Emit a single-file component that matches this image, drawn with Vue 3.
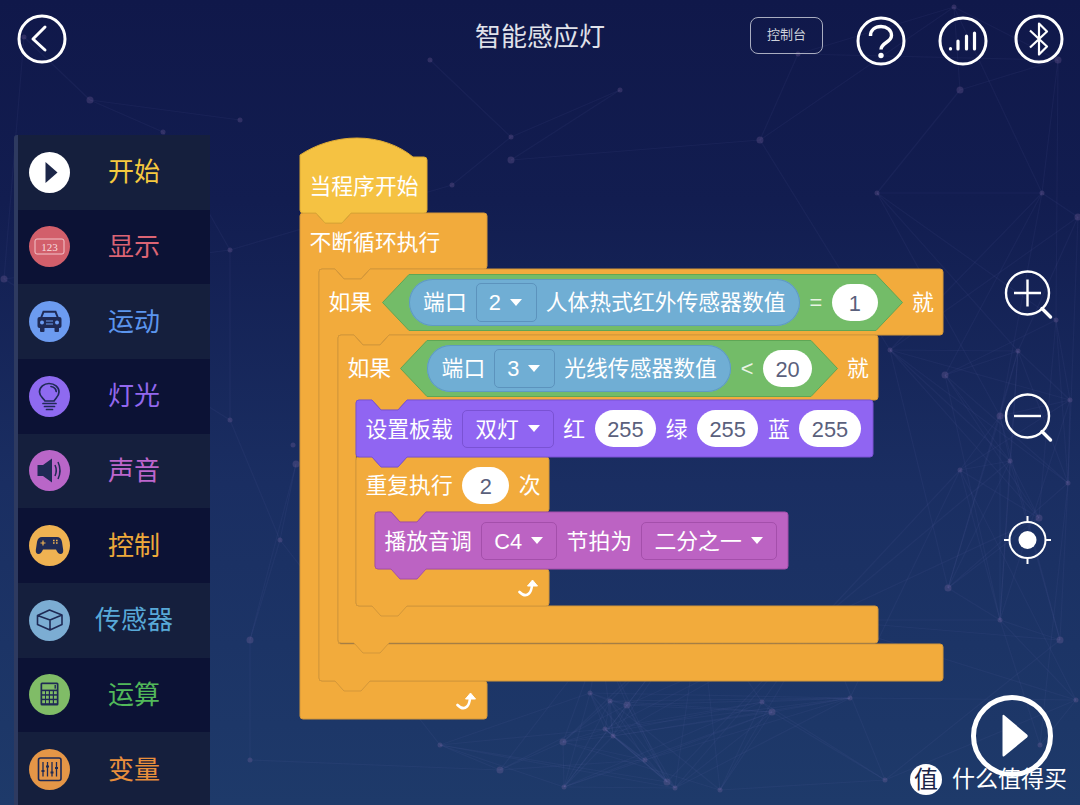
<script setup>
// notch sizes shared by every block
const R = 3
const notchLeft = 16

function notch(x, y) {
  return `L${x + notchLeft} ${y} l9 10 h17 l9 -10 `
}
function tab(x, y) {
  return `L${x + notchLeft + 35} ${y} l-9 10 h-17 l-9 -10 `
}

function stackBlock(x, y, w, h, hasTab = true) {
  return `M${x} ${y + R} Q${x} ${y} ${x + R} ${y} ` + notch(x, y) +
    `L${x + w - R} ${y} Q${x + w} ${y} ${x + w} ${y + R} L${x + w} ${y + h - R} Q${x + w} ${y + h} ${x + w - R} ${y + h} ` +
    (hasTab ? tab(x, y + h) : '') +
    `L${x + R} ${y + h} Q${x} ${y + h} ${x} ${y + h - R} Z`
}

function cBlock(x, y, w, head, arm, innerEnd, tw, end, hasTab = true) {
  const yh = y + head
  const ax = x + arm
  return `M${x} ${y + R} Q${x} ${y} ${x + R} ${y} ` + notch(x, y) +
    `L${x + w - R} ${y} Q${x + w} ${y} ${x + w} ${y + R} L${x + w} ${yh - R} Q${x + w} ${yh} ${x + w - R} ${yh} ` +
    tab(ax, yh) +
    `L${ax + R} ${yh} Q${ax} ${yh} ${ax} ${yh + R} L${ax} ${innerEnd - R} Q${ax} ${innerEnd} ${ax + R} ${innerEnd} ` +
    `L${x + tw - R} ${innerEnd} Q${x + tw} ${innerEnd} ${x + tw} ${innerEnd + R} L${x + tw} ${end - R} Q${x + tw} ${end} ${x + tw - R} ${end} ` +
    (hasTab ? tab(x, end) : '') +
    `L${x + R} ${end} Q${x} ${end} ${x} ${end - R} Z`
}

const shapes = [
  { cls: 'orange', d: cBlock(300, 213, 187, 56, 19, 681, 187, 719, false) },
  { cls: 'orange', d: cBlock(319, 269, 624, 66, 19, 644, 624, 681) },
  { cls: 'orange', d: cBlock(338, 335, 540, 65, 18, 606, 540, 643) },
  { cls: 'orange', d: cBlock(356, 457, 193, 55, 19, 569, 193, 606) },
  { cls: 'magenta', d: stackBlock(375, 512, 413, 57) },
  { cls: 'purple', d: stackBlock(356, 400, 517, 57) },
  {
    cls: 'yellow',
    d: 'M300 155 C315 145 335 138 357 138 C380 138 400 146 413 157 L424 157 Q427 157 427 160 L427 210 Q427 213 424 213 ' +
      tab(300, 213) + 'L303 213 Q300 213 300 210 Z',
  },
]

function hexPath(w, h, p) {
  return `M0.5 ${h / 2} L${p} 0.5 H${w - p} L${w - 0.5} ${h / 2} L${w - p} ${h - 0.5} H${p} Z`
}

// faint network in the backdrop, points read off the reference
const dots = [
  [4, 279], [163, 132], [293, 445], [296, 464], [24, 37], [511, 137], [511, 160], [452, 185],
  [890, 350], [945, 375], [954, 7], [798, 54], [1058, 60], [1056, 320], [1018, 351], [1000, 416],
  [1010, 461], [1068, 483], [1039, 518], [877, 193], [1042, 193], [1078, 217], [590, 693], [610, 701],
  [627, 705], [605, 729], [613, 736], [563, 742], [645, 760], [564, 787], [667, 782], [675, 788],
  [762, 702], [772, 712], [850, 698], [885, 780], [948, 588], [1076, 700], [1040, 745], [250, 640],
  [230, 420], [240, 120], [760, 140], [620, 90], [430, 60], [90, 100], [960, 470], [250, 760],
  [500, 770], [440, 745], [1000, 620], [1060, 640], [600, 640], [700, 610], [820, 620], [280, 540],
  [230, 250], [960, 90], [1070, 400], [720, 790],
]
let seed = 29
function rnd() {
  seed = (seed * 16807) % 2147483647
  return seed / 2147483647
}
const links = []
dots.forEach((a, i) => {
  dots.slice(i + 1).forEach((b) => {
    const dist = Math.hypot(a[0] - b[0], a[1] - b[1])
    if (dist < 270 && rnd() > 0.45) links.push([a, b])
  })
})
</script>

<template>
  <div class="page">
    <svg class="net" width="1080" height="805">
      <line v-for="(l, i) in links" :key="i" :x1="l[0][0]" :y1="l[0][1]" :x2="l[1][0]" :y2="l[1][1]" />
      <circle v-for="(c, i) in dots" :key="'d' + i" :cx="c[0]" :cy="c[1]" :r="i % 3 === 0 ? 3.5 : 2.5" />
    </svg>

    <header class="top">
      <svg class="back" width="50" height="50" viewBox="0 0 50 50">
        <circle cx="25" cy="25" r="23" fill="none" stroke="#fff" stroke-width="3" />
        <path d="M28 13 L16 25 L28 36" fill="none" stroke="#fff" stroke-width="3" stroke-linecap="round" stroke-linejoin="round" />
      </svg>
      <h1 class="title">智能感应灯</h1>
      <div class="console">控制台</div>
      <svg class="tool" width="50" height="50" viewBox="0 0 50 50">
        <circle cx="25" cy="25" r="23" fill="none" stroke="#fff" stroke-width="3" />
        <path d="M14.5 20 C14.5 14 19 10.5 25 10.5 C31 10.5 35.5 14 35.5 19.5 C35.5 26.5 25 26.5 25 33.5" fill="none" stroke="#fff" stroke-width="3.4" />
        <circle cx="25" cy="39.5" r="2.7" fill="#fff" />
      </svg>
      <svg class="tool tool-signal" width="50" height="50" viewBox="0 0 50 50">
        <circle cx="25" cy="25" r="23" fill="none" stroke="#fff" stroke-width="3" />
        <g stroke="#fff" stroke-width="3.2" stroke-linecap="round">
          <path d="M12.5 33 V32.5" />
          <path d="M20 33 V25" />
          <path d="M28.5 33 V20" />
          <path d="M36.5 33 V17" />
        </g>
      </svg>
      <svg class="tool tool-bt" width="50" height="50" viewBox="0 0 50 50">
        <circle cx="25" cy="25" r="23" fill="none" stroke="#fff" stroke-width="3" />
        <path d="M16 16.5 L33 32.5 L25 40.5 V9.5 L33 17.5 L16 33.5" fill="none" stroke="#fff" stroke-width="2.2" stroke-linejoin="round" />
      </svg>
    </header>

    <div class="main">
      <nav class="side">
        <div class="cat c-start">
          <svg class="ico" width="41" height="41" viewBox="0 0 41 41">
            <circle cx="20.5" cy="20.5" r="20.5" fill="#fff" />
            <path d="M16.5 10 L28.5 20.5 L16.5 31 Z" fill="#1c2648" />
          </svg>
          <span>开始</span>
        </div>
        <div class="cat c-show">
          <svg class="ico" width="41" height="41" viewBox="0 0 41 41">
            <circle cx="20.5" cy="20.5" r="20.5" fill="#d25f6b" />
            <rect x="6" y="13" width="29" height="15" rx="2" fill="none" stroke="#f3c6cb" stroke-width="1" />
            <text x="20.5" y="24.5" text-anchor="middle" class="ico-num">123</text>
          </svg>
          <span>显示</span>
        </div>
        <div class="cat c-move">
          <svg class="ico" width="41" height="41" viewBox="0 0 41 41">
            <circle cx="20.5" cy="20.5" r="20.5" fill="#6c9bf0" />
            <path d="M12 17 L14.5 10.8 H26.5 L29 17" fill="none" stroke="#1f2a55" stroke-width="2" />
            <rect x="8.5" y="16" width="24" height="11" rx="2" fill="#1f2a55" />
            <rect x="11" y="26" width="4.5" height="5" rx="1" fill="#1f2a55" />
            <rect x="25.5" y="26" width="4.5" height="5" rx="1" fill="#1f2a55" />
            <circle cx="13" cy="21.5" r="2" fill="#6c9bf0" />
            <circle cx="28" cy="21.5" r="2" fill="#6c9bf0" />
            <path d="M17 20 H24 M17 23 H24" stroke="#6c9bf0" stroke-width="1.2" />
          </svg>
          <span>运动</span>
        </div>
        <div class="cat c-light">
          <svg class="ico" width="41" height="41" viewBox="0 0 41 41">
            <circle cx="20.5" cy="20.5" r="20.5" fill="#8e6af0" />
            <g fill="none" stroke="#1f2a55" stroke-width="1.7" stroke-linecap="round">
              <path d="M16 25 C14 22 10.5 20.5 10.5 16 C10.5 11 15 7.5 20 7.5 C25.5 7.5 30 11 30 16 C30 20.5 26.5 22 25 25 Z" />
              <path d="M22 10.5 C25 11 27 13 27.2 15.5" />
              <path d="M14 27.5 H27 M15.5 30.5 H25.5 M17.5 33.5 H23.5" />
            </g>
          </svg>
          <span>灯光</span>
        </div>
        <div class="cat c-sound">
          <svg class="ico" width="41" height="41" viewBox="0 0 41 41">
            <circle cx="20.5" cy="20.5" r="20.5" fill="#b966c8" />
            <path d="M8.5 15 H14 L23 8.5 V32.5 L14 26 H8.5 Z" fill="#1f2a55" />
            <path d="M26 15 Q28.5 20.5 26 26 M29 12 Q33 20.5 29 29" fill="none" stroke="#1f2a55" stroke-width="1.5" />
          </svg>
          <span>声音</span>
        </div>
        <div class="cat c-ctrl">
          <svg class="ico" width="41" height="41" viewBox="0 0 41 41">
            <circle cx="20.5" cy="20.5" r="20.5" fill="#efb252" />
            <path d="M13 12 H28 Q32 12 33 17 L34.2 25 Q34.5 29 31.5 29 Q29 29 27 24.5 H14 Q12 29 9.5 29 Q6.5 29 6.8 25 L8 17 Q9 12 13 12 Z" fill="#1f2a55" />
            <path d="M11.5 18 H16.5 M14 15.5 V20.5" stroke="#efb252" stroke-width="1.2" />
            <path d="M24 15.5 h1.6 M27 15.5 h1.6 M24 18 h1.6 M27 18 h1.6" stroke="#efb252" stroke-width="1.5" />
          </svg>
          <span>控制</span>
        </div>
        <div class="cat c-sensor">
          <svg class="ico" width="41" height="41" viewBox="0 0 41 41">
            <circle cx="20.5" cy="20.5" r="20.5" fill="#7cadd3" />
            <path d="M8.5 15.5 L20.5 10 L33 15 L21 20 Z M8.5 15.5 V24.5 L21 30 V20 M33 15 V24.5 L21 30" fill="none" stroke="#1f2a55" stroke-width="1.6" stroke-linejoin="round" />
          </svg>
          <span>传感器</span>
        </div>
        <div class="cat c-calc">
          <svg class="ico" width="41" height="41" viewBox="0 0 41 41">
            <circle cx="20.5" cy="20.5" r="20.5" fill="#80bc67" />
            <rect x="11.5" y="8.5" width="18" height="23" rx="1.5" fill="#1f2a55" />
            <rect x="13.2" y="10.2" width="14.6" height="5.4" fill="#80bc67" />
            <rect x="25.5" y="11" width="1.4" height="3.6" fill="#1f2a55" />
            <g fill="#80bc67">
              <rect x="13.2" y="17.2" width="2.8" height="3" /><rect x="17" y="17.2" width="2.8" height="3" /><rect x="21" y="17.2" width="2.8" height="3" /><rect x="25" y="17.2" width="2.8" height="3" />
              <rect x="13.2" y="21.7" width="2.8" height="3" /><rect x="17" y="21.7" width="2.8" height="3" /><rect x="21" y="21.7" width="2.8" height="3" /><rect x="25" y="21.7" width="2.8" height="3" />
              <rect x="13.2" y="26.2" width="2.8" height="3" /><rect x="17" y="26.2" width="2.8" height="3" /><rect x="21" y="26.2" width="2.8" height="3" /><rect x="25" y="26.2" width="2.8" height="3" />
            </g>
          </svg>
          <span>运算</span>
        </div>
        <div class="cat c-var">
          <svg class="ico" width="41" height="41" viewBox="0 0 41 41">
            <circle cx="20.5" cy="20.5" r="20.5" fill="#e59647" />
            <rect x="9.5" y="9" width="22.5" height="22.5" rx="2" fill="none" stroke="#1f2a55" stroke-width="1.6" />
            <g stroke="#1f2a55" stroke-width="1.3">
              <path d="M14 13 V27.5 M18.5 13 V27.5 M23 13 V27.5 M27.5 13 V27.5" />
              <path d="M12.5 22 h3 M17 17.5 h3 M21.5 23.5 h3 M26 19 h3" stroke-width="2" />
            </g>
          </svg>
          <span>变量</span>
        </div>
      </nav>

      <aside class="zoomers">
        <svg width="50" height="50" viewBox="0 0 50 50">
          <circle cx="23.5" cy="23" r="21.5" fill="none" stroke="#fff" stroke-width="2.4" />
          <path d="M38 38.5 L46.5 47" stroke="#fff" stroke-width="3.4" stroke-linecap="round" />
          <path d="M10 23 H37 M23.5 9.5 V36.5" stroke="#fff" stroke-width="2.4" />
        </svg>
        <svg width="50" height="50" viewBox="0 0 50 50">
          <circle cx="23.5" cy="23" r="21.5" fill="none" stroke="#fff" stroke-width="2.4" />
          <path d="M38 38.5 L46.5 47" stroke="#fff" stroke-width="3.4" stroke-linecap="round" />
          <path d="M10 23 H37" stroke="#fff" stroke-width="2.4" />
        </svg>
        <svg width="50" height="50" viewBox="0 0 50 50">
          <circle cx="23.5" cy="25" r="18" fill="none" stroke="#fff" stroke-width="2" />
          <circle cx="23.5" cy="25" r="9" fill="#fff" />
          <path d="M23.5 1 V7 M23.5 43 V49 M0 25 H5.5 M41.5 25 H47" stroke="#fff" stroke-width="2" />
        </svg>
      </aside>
    </div>

    <!-- blocks sit on the free canvas -->
    <svg class="shapes" width="1080" height="805">
      <path v-for="(s, i) in shapes" :key="i" :d="s.d" :class="s.cls" />
    </svg>

    <div class="row r-hat"><span>当程序开始</span></div>
    <div class="row r-forever"><span>不断循环执行</span></div>

    <div class="row r-if1">
      <span>如果</span>
      <div class="bool b1">
        <svg width="521" height="57"><path :d="hexPath(521, 57, 27)" /></svg>
        <div class="reporter">
          <span>端口</span>
          <div class="dd dd-blue">2<i class="caret"></i></div>
          <span>人体热式红外传感器数值</span>
        </div>
        <span class="op">=</span>
        <div class="pill p46">1</div>
      </div>
      <span>就</span>
    </div>

    <div class="row r-if2">
      <span>如果</span>
      <div class="bool b2">
        <svg width="438" height="57"><path :d="hexPath(438, 57, 27)" /></svg>
        <div class="reporter">
          <span>端口</span>
          <div class="dd dd-blue">3<i class="caret"></i></div>
          <span>光线传感器数值</span>
        </div>
        <span class="op">&lt;</span>
        <div class="pill p49">20</div>
      </div>
      <span>就</span>
    </div>

    <div class="row r-led">
      <span>设置板载</span>
      <div class="dd dd-purple">双灯<i class="caret"></i></div>
      <span>红</span>
      <div class="pill p61">255</div>
      <span>绿</span>
      <div class="pill p61">255</div>
      <span>蓝</span>
      <div class="pill p61">255</div>
    </div>

    <div class="row r-repeat">
      <span>重复执行</span>
      <div class="pill p47">2</div>
      <span>次</span>
    </div>

    <div class="row r-tone">
      <span>播放音调</span>
      <div class="dd dd-magenta">C4<i class="caret"></i></div>
      <span>节拍为</span>
      <div class="dd dd-magenta">二分之一<i class="caret"></i></div>
    </div>

    <svg class="loop l-inner" width="21" height="20" viewBox="0 0 21 20">
      <path d="M1.5 13 Q7 18.5 11 14.5 Q13.5 12 14 6" fill="none" stroke="#fff" stroke-width="2.6" stroke-linecap="round" />
      <path d="M9.5 7 L14.5 1 L19.5 7 Z" fill="#fff" stroke="#fff" stroke-width="1" stroke-linejoin="round" />
    </svg>
    <svg class="loop l-outer" width="21" height="20" viewBox="0 0 21 20">
      <path d="M1.5 13 Q7 18.5 11 14.5 Q13.5 12 14 6" fill="none" stroke="#fff" stroke-width="2.6" stroke-linecap="round" />
      <path d="M9.5 7 L14.5 1 L19.5 7 Z" fill="#fff" stroke="#fff" stroke-width="1" stroke-linejoin="round" />
    </svg>

    <svg class="run" width="82" height="82" viewBox="0 0 82 82">
      <circle cx="41" cy="41" r="38.5" fill="none" stroke="#fff" stroke-width="5" />
      <path d="M33 20 Q31.5 19 31.5 21 V60 Q31.5 62.5 33.5 61 L56 42.5 Q57.5 41 56 39.5 Z" fill="#fff" />
    </svg>

    <div class="mark">
      <div class="mark-logo">值</div>
      <span>什么值得买</span>
    </div>
  </div>
</template>

<style>
html, body {
  margin: 0;
  background: #10184a;
}
</style>

<style scoped>
.page {
  position: relative;
  width: 1080px;
  height: 805px;
  overflow: hidden;
  background: linear-gradient(180deg, #10184a 0%, #121d50 25%, #1a2e62 60%, #1e3a6a 100%);
  font-family: "Liberation Sans", "Noto Sans CJK SC", sans-serif;
  color: #fff;
}
.net {
  position: absolute;
  left: 0;
  top: 0;
}
.net line {
  stroke: rgba(130, 130, 205, 0.07);
  stroke-width: 1.2;
}
.net circle {
  fill: rgba(150, 115, 175, 0.24);
}

/* header */
.top {
  position: relative;
  height: 80px;
  display: flex;
  align-items: flex-start;
  padding: 14px 16px 0 17px;
  box-sizing: border-box;
}
.back {
  flex: none;
}
.title {
  position: absolute;
  left: 0;
  right: 0;
  top: 19px;
  margin: 0;
  text-align: center;
  font-size: 26px;
  line-height: 36px;
  font-weight: 400;
  color: #e0e2ea;
}
.console {
  margin: 3px 0 0 auto;
  width: 73px;
  height: 37px;
  box-sizing: border-box;
  border: 1.5px solid #a9adc0;
  border-radius: 8px;
  font-size: 13px;
  line-height: 34px;
  text-align: center;
  color: #cdd0da;
}
.tool {
  margin: 2px 0 0 33px;
  flex: none;
}
.tool-signal {
  margin-left: 32px;
}
.tool-bt {
  margin: 0 0 0 26px;
}

/* left category list */
.main {
  position: relative;
  display: flex;
  justify-content: space-between;
}
.side {
  margin: 55px 0 0 14px;
  width: 196px;
  border-left: 4px solid #2e3a60;
  border-radius: 3px 0 0 0;
  box-sizing: border-box;
}
.cat {
  height: 74.67px;
  display: flex;
  align-items: center;
  padding: 0 12px 0 11px;
  box-sizing: border-box;
  background: #151f3d;
}
.cat:nth-child(even) {
  background: #0c1235;
}
.cat span {
  flex: 1;
  text-align: center;
  font-size: 26px;
  line-height: 1;
}
.ico {
  flex: none;
}
.ico-num {
  font-family: "Liberation Serif", serif;
  font-size: 11px;
  fill: #f7dcdf;
}
.c-start { color: #f5c93f; }
.c-show { color: #dc6474; }
.c-move { color: #5b95ee; }
.c-light { color: #9368ee; }
.c-sound { color: #bd66cd; }
.c-ctrl { color: #eea93a; }
.c-sensor { color: #58a9d8; }
.c-calc { color: #52b95a; }
.c-var { color: #e98f3c; }

/* right zoom tools */
.zoomers {
  display: flex;
  flex-direction: column;
  gap: 72.5px;
  margin: 190px 26.5px 0 0;
}

/* block shapes */
.shapes {
  position: absolute;
  left: 0;
  top: 0;
}
.shapes path {
  stroke-width: 1;
}
.orange { fill: #f2ab3c; stroke: #d3973a; }
.yellow { fill: #f5c242; stroke: #dca935; }
.purple { fill: #9065f2; stroke: #7a52d4; }
.magenta { fill: #bc63c3; stroke: #a44fab; }

.row {
  position: absolute;
  display: flex;
  align-items: center;
  gap: 9.5px;
  padding-left: 9.5px;
  font-size: 21.8px;
  line-height: 1;
  white-space: nowrap;
}
.row > span,
.reporter > span,
.bool > span {
  padding-top: 2px;
}
.r-hat { left: 300px; top: 158px; height: 55px; }
.r-forever { left: 300px; top: 214px; height: 56px; }
.r-if1 { left: 319px; top: 269px; height: 66px; }
.r-if2 { left: 338px; top: 335px; height: 66px; gap: 9px; }
.r-led { left: 356px; top: 400px; height: 57px; }
.r-repeat { left: 356px; top: 457px; height: 56px; }
.r-tone { left: 375px; top: 512px; height: 57px; }

.bool {
  position: relative;
  height: 57px;
  display: flex;
  align-items: center;
  gap: 9.5px;
  padding-left: 27px;
  box-sizing: border-box;
}
.b1 { width: 521px; }
.b2 { width: 438px; }
.bool svg {
  position: absolute;
  left: 0;
  top: 0;
}
.bool svg path {
  fill: #73bc68;
  stroke: #5fa655;
  stroke-width: 1;
}
.reporter {
  position: relative;
  height: 47px;
  display: flex;
  align-items: center;
  gap: 9px;
  padding: 0 14.5px 0 14.5px;
  border-radius: 24px;
  background: #70aed4;
  box-shadow: 0 0 0 1px #5f9ac2 inset;
}
.bool > span {
  position: relative;
}
.op {
  color: #e8f4e4;
}
.dd {
  height: 38px;
  display: flex;
  align-items: center;
  gap: 9px;
  padding: 2px 13px 0 12px;
  box-sizing: border-box;
  border-radius: 5px;
  border-width: 1px;
  border-style: solid;
}
.dd-blue { border-color: #5c93bd; height: 39px; padding-right: 13.9px; }
.dd-purple { border-color: #7a52d4; }
.dd-magenta { border-color: #a44fab; }
.caret {
  width: 0;
  height: 0;
  margin-top: -2px;
  border-left: 6.5px solid transparent;
  border-right: 6.5px solid transparent;
  border-top: 7px solid #fff;
}
.pill {
  position: relative;
  height: 37px;
  border-radius: 19px;
  background: #fff;
  color: #5a607c;
  text-align: center;
  line-height: 39px;
}
.p46 { width: 46px; }
.p47 { width: 47px; }
.p49 { width: 49px; }
.p61 { width: 61.5px; }

.loop {
  position: absolute;
}
.l-inner { left: 518px; top: 579px; }
.l-outer { left: 456px; top: 692px; }

.run {
  position: absolute;
  left: 971px;
  top: 695px;
}
.mark {
  position: absolute;
  left: 910px;
  top: 764px;
  display: flex;
  align-items: center;
  gap: 10px;
  font-size: 23px;
  line-height: 31px;
}
.mark-logo {
  width: 32px;
  height: 31px;
  border-radius: 50%;
  background: #fff;
  color: #1a2448;
  text-align: center;
  font-size: 24px;
  line-height: 31px;
}
</style>
